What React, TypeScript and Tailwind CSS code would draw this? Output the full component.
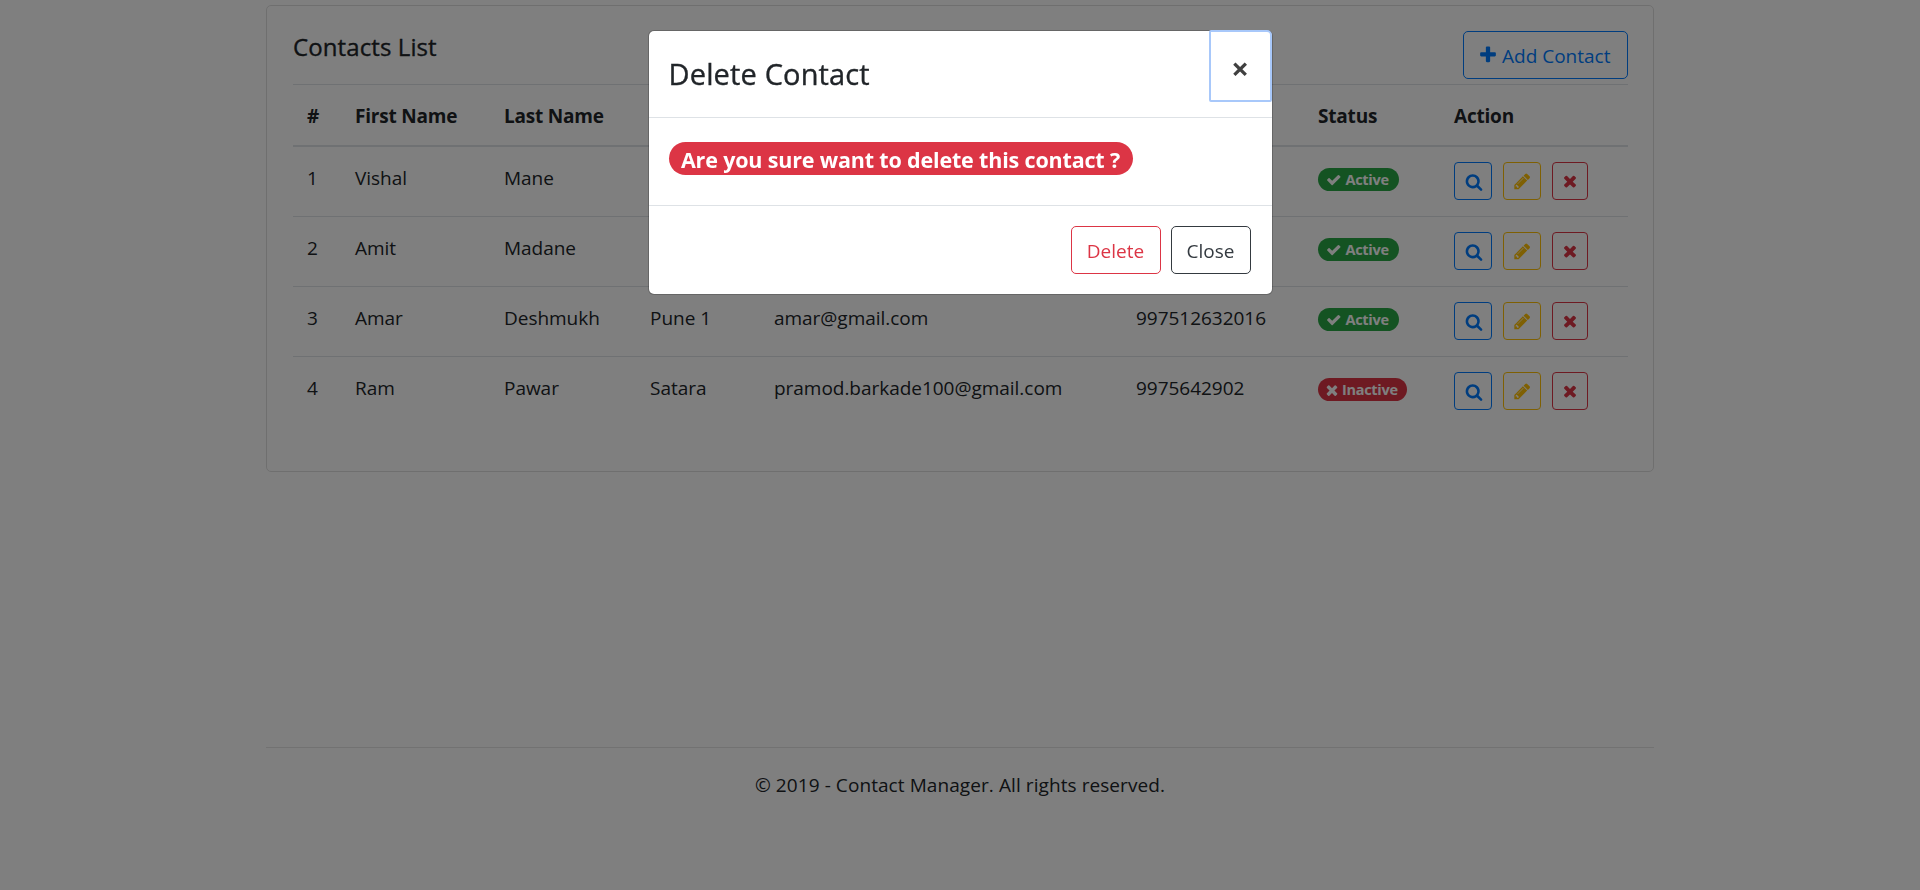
import type { ReactNode } from 'react';

const PATHS = {
  search:
    'M1216 832q0-185-131.5-316.5t-316.5-131.5-316.5 131.5-131.5 316.5 131.5 316.5 316.5 131.5 316.5-131.5 131.5-316.5zm512 832q0 52-38 90t-90 38q-54 0-90-38l-343-342q-179 124-399 124-143 0-273.5-55.5t-225-150-150-225-55.5-273.5 55.5-273.5 150-225 225-150 273.5-55.5 273.5 55.5 225 150 150 225 55.5 273.5q0 220-124 399l343 343q37 37 37 90z',
  pencil:
    'M491 1536l91-91-235-235-91 91v107h128v128h107zm523-928q0-22-22-22-10 0-17 7l-542 542q-7 7-7 17 0 22 22 22 10 0 17-7l542-542q7-7 7-17zm-54-192l416 416-832 832h-416v-416zm683 96q0 53-37 90l-166 166-416-416 166-165q36-38 90-38 53 0 91 38l235 234q37 39 37 91z',
  times:
    'M1490 1322q0 40-28 68l-136 136q-28 28-68 28t-68-28l-294-294-294 294q-28 28-68 28t-68-28l-136-136q-28-28-28-68t28-68l294-294-294-294q-28-28-28-68t28-68l136-136q28-28 68-28t68 28l294 294 294-294q28-28 68-28t68 28l136 136q28 28 28 68t-28 68l-294 294 294 294q28 28 28 68z',
  check:
    'M1671 566q0 40-28 68l-724 724-136 136q-28 28-68 28t-68-28l-136-136-362-362q-28-28-28-68t28-68l136-136q28-28 68-28t68 28l294 295 656-657q28-28 68-28t68 28l136 136q28 28 28 68z',
  plus:
    'M1600 736v192q0 40-28 68t-68 28h-416v416q0 40-28 68t-68 28h-192q-40 0-68-28t-28-68v-416h-416q-40 0-68-28t-28-68v-192q0-40 28-68t68-28h416v-416q0-40 28-68t68-28h192q40 0 68 28t28 68v416h416q40 0 68 28t28 68z',
};

function Icon({ name, className }: { name: keyof typeof PATHS; className: string }) {
  return (
    <svg viewBox="0 0 1792 1792" fill="currentColor" className={className} aria-hidden="true">
      <path d={PATHS[name]} />
    </svg>
  );
}

const contacts = [
  { first: 'Vishal', last: 'Mane', city: '', email: '', phone: '', active: true },
  { first: 'Amit', last: 'Madane', city: '', email: '', phone: '', active: true },
  { first: 'Amar', last: 'Deshmukh', city: 'Pune 1', email: 'amar@gmail.com', phone: '997512632016', active: true },
  { first: 'Ram', last: 'Pawar', city: 'Satara', email: 'pramod.barkade100@gmail.com', phone: '9975642902', active: false },
];

function Th({ children }: { children?: ReactNode }) {
  return (
    <th className="h-[63px] border-t border-b-2 border-[#dee2e6] px-[15px] pt-[15px] text-left align-top text-[19px] leading-8 font-bold tracking-[-0.2px] first:pl-[14px]">
      {children}
    </th>
  );
}

function Td({ children }: { children?: ReactNode }) {
  return (
    <td className="h-[70px] px-[15px] pt-[15px] align-top tracking-[-0.03px] first:pl-[14px]">{children}</td>
  );
}

function StatusBadge({ active }: { active: boolean }) {
  return active ? (
    <span className="mt-[6px] flex h-[23px] w-[81px] items-center rounded-full bg-[#28a745] pl-[8px] text-[14.5px] leading-[23px] font-bold tracking-[-0.3px] text-white">
      <Icon name="check" className="mr-[4px] size-[15.5px]" />
      Active
    </span>
  ) : (
    <span className="mt-[6px] flex h-[23px] w-[89px] items-center rounded-full bg-[#dc3545] pl-[6px] text-[14.5px] leading-[23px] font-bold tracking-[-0.3px] text-white">
      <Icon name="times" className="mr-[2px] size-[16px]" />
      Inactive
    </span>
  );
}

export default function App() {
  return (
    <div className="h-[890px] overflow-hidden bg-white font-['Open_Sans','Noto_Sans',sans-serif] text-[19px] leading-8 text-[#212529]">
      <main className="mx-auto w-[1388px] pt-[5px]">
        <section className="h-[467px] rounded-[5px] border border-[#dfdfdf] pr-[25px] pl-[26px]">
          <div className="flex h-[78px] items-start justify-between pt-[25px]">
            <h5 className="pt-px text-[24px] leading-[30px] font-medium tracking-[0.1px] [-webkit-text-stroke:0.35px]">
              Contacts List
            </h5>
            <button className="flex h-[48px] w-[165px] items-center rounded-[5px] border border-[#007bff] pl-[14px] text-[#007bff]">
              <Icon name="plus" className="mr-[4px] size-[20px]" />
              <span className="pt-px">Add Contact</span>
            </button>
          </div>
          <table className="w-full table-fixed border-separate border-spacing-0">
            <colgroup>
              <col className="w-[47px]" />
              <col className="w-[149px]" />
              <col className="w-[146px]" />
              <col className="w-[124px]" />
              <col className="w-[362px]" />
              <col className="w-[182px]" />
              <col className="w-[136px]" />
              <col />
            </colgroup>
            <thead>
              <tr>
                <Th>#</Th>
                <Th>First Name</Th>
                <Th>Last Name</Th>
                <Th />
                <Th />
                <Th />
                <Th>Status</Th>
                <Th>Action</Th>
              </tr>
            </thead>
            <tbody className="[&>tr:not(:last-child)>td]:border-b [&>tr:not(:last-child)>td]:border-[#dee2e6]">
              {contacts.map((c, i) => (
                <tr key={c.first}>
                  <Td>{i + 1}</Td>
                  <Td>{c.first}</Td>
                  <Td>{c.last}</Td>
                  <Td>{c.city}</Td>
                  <Td>{c.email}</Td>
                  <Td>{c.phone}</Td>
                  <Td>
                    <StatusBadge active={c.active} />
                  </Td>
                  <Td>
                    <div className="flex gap-[11px]">
                      <button className="flex h-[38px] w-[38px] items-center justify-center rounded-[4px] border border-[#007bff] text-[#007bff]">
                        <Icon name="search" className="mt-px ml-px size-[18px]" />
                      </button>
                      <button className="flex h-[38px] w-[38px] items-center justify-center rounded-[4px] border border-[#ffc107] text-[#ffc107]">
                        <Icon name="pencil" className="mt-px size-[18.5px]" />
                      </button>
                      <button className="flex h-[38px] w-[36px] items-center justify-center rounded-[4px] border border-[#dc3545] text-[#dc3545]">
                        <Icon name="times" className="size-[18px]" />
                      </button>
                    </div>
                  </Td>
                </tr>
              ))}
            </tbody>
          </table>
        </section>
        <footer className="mt-[275px] border-t border-[#e5e5e5] pt-[21px] text-center tracking-[0.08px]">
          © 2019 - Contact Manager. All rights reserved.
        </footer>
      </main>

      <div className="fixed inset-0 flex items-start justify-center bg-black/50 pt-[30px]">
        <div className="h-[265px] w-[625px] rounded-[6px] border border-black/20 bg-white bg-clip-padding" role="dialog">
          <div className="flex h-[87px] items-start justify-between border-b border-[#dee2e6]">
            <h4 className="pt-[24px] pl-[20px] text-[29px] leading-[38px] font-medium tracking-[0.15px] [-webkit-text-stroke:0.35px]">
              Delete Contact
            </h4>
            <button className="-mt-px h-[72px] w-[63px] rounded-[2px] rounded-tr-[5px] border-2 border-[#a8c8fa] pt-[5px] text-center text-[31px] leading-[63px] font-bold text-[#404040]">
              ×
            </button>
          </div>
          <div className="flex h-[88px] border-b border-[#dee2e6] px-[20px] pt-[24px]">
            <span className="h-[33px] w-[464px] rounded-full bg-[#dc3545] text-center text-[21.5px] leading-[35px] font-bold tracking-[-0.17px] whitespace-nowrap text-white">
              Are you sure want to delete this contact ?
            </span>
          </div>
          <div className="flex justify-end gap-[10px] pt-[20px] pr-[21px]">
            <button className="h-[48px] w-[90px] rounded-[5px] border border-[#dc3545] pt-px text-[#dc3545]">Delete</button>
            <button className="h-[48px] w-[80px] rounded-[5px] border border-[#343a40] pt-px text-[#343a40]">Close</button>
          </div>
        </div>
      </div>
    </div>
  );
}
